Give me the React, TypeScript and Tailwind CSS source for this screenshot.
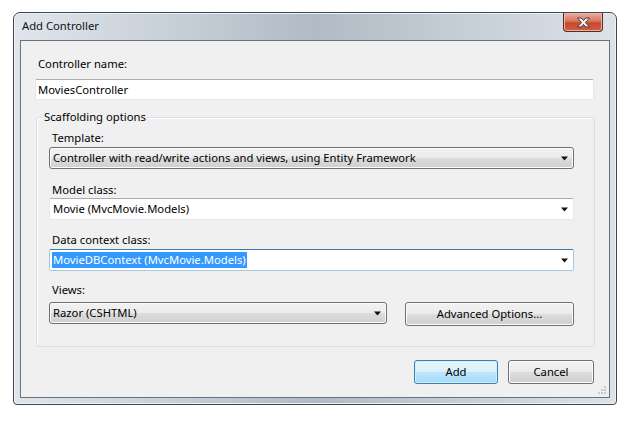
import React from "react";

const font = { fontFamily: '"Noto Sans", "Liberation Sans", sans-serif' };

const Arrow = () => (
  <svg width="9" height="5" viewBox="0 0 9 5" className="shrink-0">
    <path d="M1 0.5 L8 0.5 L4.5 4.5 Z" fill="#111" />
  </svg>
);

// combo that looks like a push button (dropdown list)
const ButtonCombo = ({ text, className = "" }: { text: string; className?: string }) => (
  <div
    className={`h-[22px] flex items-center justify-between pl-[3px] pr-[4px] border border-[#707070] rounded-[3px] bg-[linear-gradient(#f2f2f2_0%,#ebebeb_50%,#dddddd_50%,#cfcfcf_100%)] shadow-[inset_0_0_0_1px_#fcfcfc] ${className}`}
  >
    <span className="text-[11.25px] leading-[16px] text-black whitespace-nowrap">{text}</span>
    <Arrow />
  </div>
);

// editable combo
const EditCombo = ({ text, focused = false }: { text: string; focused?: boolean }) => (
  <div
    className={`h-[22px] flex items-center justify-between pl-[2px] pr-[4px] bg-white rounded-[2px] border ${
      focused
        ? "border-[#a7c6e0] border-t-[#3d7bad]"
        : "border-[#e3e9ef] border-t-[#abadb3]"
    }`}
  >
    {focused ? (
      <span className="text-[11.25px] leading-[16px] text-white bg-[#3399ff] px-[1px] whitespace-nowrap">
        {text}
      </span>
    ) : (
      <span className="text-[11.25px] leading-[16px] text-black px-[1px] whitespace-nowrap">{text}</span>
    )}
    <Arrow />
  </div>
);

const Label = ({ children, className = "" }: { children: React.ReactNode; className?: string }) => (
  <div className={`text-[11.25px] leading-[16px] text-black pl-[3px] ${className}`}>{children}</div>
);

const btn =
  "h-[24px] border rounded-[3px] text-[11.25px] leading-[16px] text-black";
const grayBtn =
  "border-[#707070] bg-[linear-gradient(#f2f2f2_0%,#ebebeb_50%,#dddddd_50%,#cfcfcf_100%)] shadow-[inset_0_0_0_1px_#fcfcfc]";

export default function App() {
  return (
    <div className="w-[634px] h-[424px] bg-white pt-[12px] pl-[13px]" style={font}>
      {/* Window frame */}
      <div className="w-[604px] h-[393px] flex flex-col border border-[#3f4850] rounded-t-[7px] rounded-b-[4px] bg-[linear-gradient(90deg,#dfe5eb_0%,#c4ccd5_30%,#b1bbc5_50%,#c6ced6_75%,#dce2e8_100%)] shadow-[inset_0_0_0_1px_#eef2f5] px-[6px] pb-[6px]">
        {/* Title bar */}
        <div className="h-[27px] flex justify-between shrink-0">
          <div className="pl-[2px] pt-[5px] text-[11.25px] leading-[16px] text-[#111]">Add Controller</div>
          <div className="mr-[7px] w-[40px] h-[19px] border border-t-0 border-[#5b2a21] rounded-b-[4px] bg-[linear-gradient(#e8b0a3_0%,#d9765f_45%,#c54a2f_55%,#cf5d3f_100%)] shadow-[inset_0_0_0_1px_#ecb3a4] flex items-center justify-center">
            <svg width="15" height="11" viewBox="0 0 15 11">
              <path
                d="M1.5 1 H5.2 L7.5 3.6 L9.8 1 H13.5 L9.4 5.5 L13.5 10 H9.8 L7.5 7.4 L5.2 10 H1.5 L5.6 5.5 Z"
                fill="#f8f8f8"
                stroke="#4b3a38"
                strokeWidth="1"
                strokeLinejoin="round"
              />
            </svg>
          </div>
        </div>

        {/* Client area */}
        <div className="flex-1 flex flex-col bg-[#f0f0f0] border border-[#69737c] px-[14px] pt-[15px] relative">
          <Label>Controller name:</Label>
          <div className="mt-[7px] h-[21px] flex items-center pl-[2px] bg-white border border-[#e3e9ef] border-t-[#abadb3] rounded-[2px] text-[11.25px] leading-[16px] text-black mr-[1px]">
            MoviesController
          </div>

          {/* Scaffolding options group */}
          <div className="mt-[17px] ml-[1px] border border-[#d5dfe5] rounded-[3px] shadow-[inset_1px_1px_0_#ffffff] pl-[12px] pr-[20px] pb-[20px] flex flex-col">
            <span className="-mt-[9px] -ml-[6px] w-fit px-[1px] bg-[#f0f0f0] text-[11.25px] leading-[16px] text-black">
              Scaffolding options
            </span>
            <Label className="mt-[5px]">Template:</Label>
            <ButtonCombo
              className="mt-[1px]"
              text="Controller with read/write actions and views, using Entity Framework"
            />
            <Label className="mt-[13px]">Model class:</Label>
            <EditCombo text="Movie (MvcMovie.Models)" />
            <Label className="mt-[12px]">Data context class:</Label>
            <div className="mt-[1px]">
              <EditCombo text="MovieDBContext (MvcMovie.Models)" focused />
            </div>
            <Label className="mt-[11px]">Views:</Label>
            <div className="mt-[4px] flex items-start justify-between">
              <ButtonCombo className="w-[338px]" text="Razor (CSHTML)" />
              <button className={`w-[169px] ${btn} ${grayBtn}`}>Advanced Options...</button>
            </div>
          </div>

          {/* Dialog buttons */}
          <div className="mt-[13px] flex justify-end gap-[10px] pr-[1px]">
            <button
              className={`w-[84px] ${btn} border-[#3c7fb1] bg-[linear-gradient(#eaf6fd_0%,#d9f0fc_50%,#bee6fd_50%,#a7d9f5_100%)] shadow-[inset_0_0_0_1px_#cff0fb]`}
            >
              Add
            </button>
            <button className={`w-[86px] ${btn} ${grayBtn}`}>Cancel</button>
          </div>

          {/* resize grip */}
          <svg className="absolute right-[2px] bottom-[2px]" width="10" height="10" viewBox="0 0 10 10">
            {[
              [8, 2],
              [8, 5],
              [5, 5],
              [8, 8],
              [5, 8],
              [2, 8],
            ].map(([x, y], i) => (
              <rect key={i} x={x - 1} y={y - 1} width="2" height="2" fill="#c5c9cd" />
            ))}
          </svg>
        </div>
      </div>
    </div>
  );
}
